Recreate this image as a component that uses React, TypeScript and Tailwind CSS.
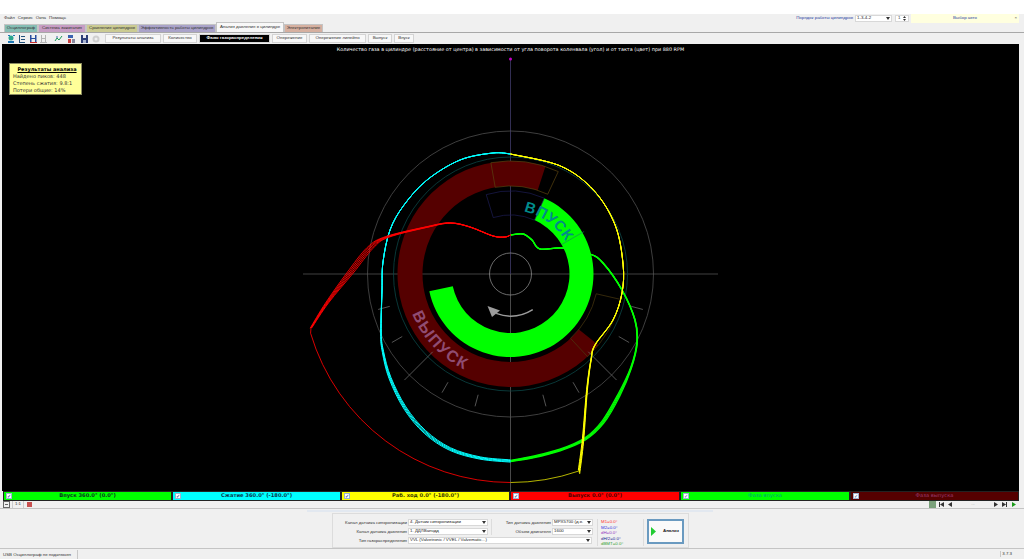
type Pt = [number, number];

const CX = 510.5;
const CY = 274;

const polar = (r: number, deg: number): Pt => {
  const a = (deg * Math.PI) / 180;
  return [CX + r * Math.sin(a), CY - r * Math.cos(a)];
};

const sector = (r1: number, r2: number, a1: number, a2: number) => {
  const large = a2 - a1 > 180 ? 1 : 0;
  const [x1, y1] = polar(r2, a1);
  const [x2, y2] = polar(r2, a2);
  const [x3, y3] = polar(r1, a2);
  const [x4, y4] = polar(r1, a1);
  return `M${x1} ${y1}A${r2} ${r2} 0 ${large} 1 ${x2} ${y2}L${x3} ${y3}A${r1} ${r1} 0 ${large} 0 ${x4} ${y4}Z`;
};

const smooth = (pts: Pt[]) => {
  let d = `M${pts[0][0]} ${pts[0][1]}`;
  for (let i = 0; i < pts.length - 1; i++) {
    const p0 = pts[Math.max(i - 1, 0)];
    const p1 = pts[i];
    const p2 = pts[i + 1];
    const p3 = pts[Math.min(i + 2, pts.length - 1)];
    d += `C${p1[0] + (p2[0] - p0[0]) / 6} ${p1[1] + (p2[1] - p0[1]) / 6} ${p2[0] - (p3[0] - p1[0]) / 6} ${p2[1] - (p3[1] - p1[1]) / 6} ${p2[0]} ${p2[1]}`;
  }
  return d;
};

// each cycle is scaled about the centre, weight says how far the cycles spread at that point
const scaled = (pts: Pt[], s: number, w: number[]): Pt[] =>
  pts.map(([x, y], i) => {
    const k = 1 + s * w[i];
    return [CX + (x - CX) * k, CY + (y - CY) * k];
  });

const redThick: Pt[] = [[311, 328], [327, 303], [350, 273], [370, 248], [387, 237], [427, 227], [450, 223], [470, 227], [493, 236], [505, 237], [510.5, 235]];
const redW = [0.2, 0.45, 1, 1, 0.55, 0.3, 0.25, 0.2, 0.15, 0.1, 0.1];
const greenA: Pt[] = [[510.5, 235], [523, 234], [532, 240], [540, 249], [563, 248], [590, 254], [603, 263], [622, 290], [635, 320], [637, 343], [631, 368], [619, 395], [603, 422], [585, 439], [560, 450], [533, 457], [510.5, 461]];
const greenW = [0.3, 0.3, 0.3, 0.3, 0.2, 0.1, 0.1, 0.15, 0.2, 0.2, 0.3, 0.7, 0.7, 0.5, 0.4, 0.4, 0.3];
const cyanA: Pt[] = [[510.5, 461], [480, 458], [450, 449], [425, 432], [405, 408], [390, 378], [383, 352], [381, 333], [382, 290], [383, 262], [390, 230], [404, 205], [427, 180], [460, 160], [493, 153], [510.5, 154]];
const cyanW = [0.5, 0.5, 0.6, 0.7, 0.7, 0.6, 0.4, 0.2, 0, 0, 0, 0, 0, 0, 0, 0];
const yellowA: Pt[] = [[510.5, 154], polar(119, 25), polar(118, 45), polar(115.5, 65), polar(113, 85), [622, 293], [613, 320], [595, 345], [591, 360], [587, 390], [583, 440], [579, 472]];
const yellowW = [0, 0, 0, 0, 0, 0, 0.1, 0.2, 0.2, 0.4, 0.7, 0.8];

const ticks = [105, 120, 150, 165, 195, 210, 240, 255];

const Chart = () => (
  <svg viewBox="2 44 1017 447" className="block h-[447px] w-[1017px]">
    <defs>
      <path id="intakeArc" d={`M${polar(64, 12).join(" ")}A64 64 0 0 1 ${polar(64, 75).join(" ")}`} />
      <path id="exhaustArc" d={`M${polar(106, 248).join(" ")}A106 106 0 0 0 ${polar(106, 190).join(" ")}`} />
    </defs>
    <line x1={303} y1={CY} x2={718} y2={CY} stroke="#5c5c5c" strokeWidth={0.7} />
    <line x1={CX} y1={60} x2={CX} y2={CY} stroke="#3f3a68" strokeWidth={0.8} />
    <line x1={CX} y1={CY} x2={CX} y2={491} stroke="#5c5c5c" strokeWidth={0.8} />
    <circle cx={CX} cy={59} r={1.5} fill="#c000c0" />
    <circle cx={CX} cy={CY} r={21} fill="none" stroke="#9a9a9a" strokeWidth={0.7} />
    <circle cx={CX} cy={CY} r={143} fill="none" stroke="#595959" strokeWidth={0.7} />
    <circle cx={CX} cy={CY} r={117} fill="none" stroke="#0b4545" strokeWidth={0.8} />

    <path d={sector(88, 113, 129, 378)} fill="#550000" />
    <path d={sector(59, 83, 24, 258)} fill="#00ff00" />
    <path d={sector(88, 113, -10, 25)} fill="none" stroke="#5a4410" strokeWidth={0.7} />
    <path d={sector(88, 113, 103, 137)} fill="none" stroke="#4a3a10" strokeWidth={0.7} />
    <path d={sector(59, 83, -17, 24)} fill="none" stroke="#1c1c55" strokeWidth={0.7} />
    <line x1={polar(59, 60)[0]} y1={polar(59, 60)[1]} x2={polar(85, 60)[0]} y2={polar(85, 60)[1]} stroke="#1a7a6a" strokeWidth={0.6} />

    {ticks.map((a) => {
      const [x1, y1] = polar(125, a);
      const [x2, y2] = polar(137, a);
      return <line key={a} x1={x1} y1={y1} x2={x2} y2={y2} stroke="#777" strokeWidth={0.7} />;
    })}
    {[135, 225].map((a) => {
      const [x1, y1] = polar(110, a);
      const [x2, y2] = polar(150, a);
      return <line key={a} x1={x1} y1={y1} x2={x2} y2={y2} stroke="#777" strokeWidth={0.7} />;
    })}

    <text fontFamily="'Liberation Sans', sans-serif" fontSize={15} fontWeight={700} letterSpacing={0.5} fill="#008b8b">
      <textPath href="#intakeArc">ВПУСК</textPath>
    </text>
    <text fontFamily="'Liberation Sans', sans-serif" fontSize={16} fontWeight={700} letterSpacing={1.5} fill="#8f4c72">
      <textPath href="#exhaustArc">ВЫПУСК</textPath>
    </text>

    <path d={`M${polar(42, 148).join(" ")}A42 42 0 0 1 ${polar(42, 200).join(" ")}`} fill="none" stroke="#9c9c9c" strokeWidth={1.4} />
    <polygon points="487.5,306 500,310.5 492,317" fill="#9c9c9c" />

    {[-0.012, -0.004, 0.004, 0.012].map((s) => (
      <path key={s} d={smooth(scaled(greenA, s, greenW))} fill="none" stroke="#00ff00" strokeWidth={1.2} />
    ))}
    {[-0.012, -0.004, 0.004, 0.012].map((s) => (
      <path key={s} d={smooth(scaled(cyanA, s, cyanW))} fill="none" stroke="#00ffff" strokeWidth={1} />
    ))}
    {[-0.012, -0.004, 0.004, 0.012].map((s) => (
      <path key={s} d={smooth(scaled(yellowA, s, yellowW))} fill="none" stroke="#ffff00" strokeWidth={1} />
    ))}
    {[-0.02, -0.01, 0, 0.01, 0.02].map((s) => (
      <path key={s} d={smooth(scaled(redThick, s, redW))} fill="none" stroke="#ff0000" strokeWidth={0.9} />
    ))}
    <path d={`M${polar(208.5, 180).join(" ")}A208.500 208.500 0 0 1 ${polar(208.5, 253.5).join(" ")}L311 328`} fill="none" stroke="#f00000" strokeWidth={0.9} />
    <path d={`M${polar(208.5, 161).join(" ")}A208.500 208.500 0 0 1 ${polar(208.5, 180).join(" ")}`} fill="none" stroke="#c8c800" strokeWidth={0.9} />
  </svg>
);

const Caret = () => (
  <svg width={4} height={3} viewBox="0 0 4 3" className="shrink-0">
    <path d="M0 0h4L2 3z" fill="#333" />
  </svg>
);

const Select = ({ text, width }: { text: string; width: string }) => (
  <div className={`flex h-[7px] shrink-0 items-center justify-between border border-[#d8d8d8] bg-white pl-[1px] pr-[1px] text-[4.4px] text-[#222] ${width}`}>
    <span className="whitespace-nowrap">{text}</span>
    <Caret />
  </div>
);

const tabs = [
  { label: "Осциллограф", cls: "w-[34px] bg-[#86bdb4]" },
  { label: "Система зажигания", cls: "w-[48px] bg-[#c79dc4]" },
  { label: "Сравнение цилиндров", cls: "w-[52px] bg-[#cbcb92]" },
  { label: "Эффективность работы цилиндров", cls: "w-[78px] bg-[#aaa3c9]" },
  { label: "Анализ давления в цилиндре", cls: "w-[68px] bg-[#f8f8f8] -mt-[1px] h-[10px]" },
  { label: "Электропитание", cls: "w-[39px] bg-[#d6b0a0]" },
];

const subTabs = [
  { label: "Результаты анализа", cls: "w-[56px]" },
  { label: "Количество", cls: "w-[34px]" },
  { label: "Фазы газораспределения", cls: "w-[71px] bg-black font-bold text-white" },
  { label: "Опережение", cls: "w-[35px]" },
  { label: "Опережение линейно", cls: "w-[57px]" },
  { label: "Выпуск", cls: "w-[24px]" },
  { label: "Впуск", cls: "w-[20px]" },
];

const ToolIcons = () => (
  <div className="flex items-center">
    <svg width={100} height={10} viewBox="0 0 100 10" className="shrink-0">
      <circle cx={7} cy={4} r={2.5} fill="#2aa58f" />
      <path d="M4 7h6v2H4zM4 1h2v1H4zM9 1h2v1H9z" fill="#1f77b4" />
      <path d="M15 1h1v8h-1zM17 2h4v1h-4zM17 5h4v1h-4zM15 8h6v1h-6z" fill="#23527c" />
      <path d="M26 1h1.500v8H26zM31 1h1.500v8H31zM27 4h4v1h-4z" fill="#2a4ea0" />
      <path d="M26 8h7v1h-7z" fill="#c83030" />
      <path d="M37 1h1v8h-1zM41 1h1v8h-1zM38 4h3v1h-3zM36 8h7v1h-7z" fill="#b5b5b5" />
      <path d="M51 7l2-3 2 2 3-4" fill="none" stroke="#1c9a5a" strokeWidth={1} />
      <circle cx={53} cy={3} r={0.8} fill="#2a4ea0" />
      <path d="M64 1h5v3h-5z" fill="#3a62b0" />
      <path d="M64 5h3v4h-3z" fill="#c84040" />
      <path d="M68 5h3v4h-3z" fill="#8a8aa0" />
      <path d="M77 1h7v8h-7z" fill="#2e3f78" />
      <path d="M79 1h3v3h-3z" fill="#e8e8f0" />
      <path d="M79 6h3v3h-3z" fill="#a9b4d0" />
      <circle cx={92} cy={5} r={3.5} fill="#cfcfcf" />
      <circle cx={92} cy={5} r={1.5} fill="#efefef" />
    </svg>
  </div>
);

const Segment = ({ label, cls, width }: { label: string; cls: string; width: string }) => (
  <div className={`relative flex h-full items-center justify-center border border-[#222] text-[5.2px] ${cls} ${width}`}>
    <span className="absolute left-[2px] top-[1px] flex h-[6px] w-[6px] items-center justify-center border border-[#9db4d0] bg-white text-[5px] leading-none text-[#2a4ea0]">
      ✓
    </span>
    <span className="whitespace-nowrap font-['DejaVu_Sans',sans-serif]">{label}</span>
  </div>
);

const NavIcon = ({ d, fill = "#333" }: { d: string; fill?: string }) => (
  <svg width={7} height={7} viewBox="0 0 7 7" className="shrink-0">
    <path d={d} fill={fill} />
  </svg>
);

export default function App() {
  return (
    <div className="flex h-[559px] w-[1024px] flex-col overflow-hidden bg-[#f0f0f0] font-['Liberation_Sans',sans-serif] text-[4.4px] text-[#333]">
      <div className="h-[14px] shrink-0 bg-white" />

      <div className="flex h-[9px] shrink-0 items-center">
        <div className="ml-[4px] flex gap-[3px]">
          <span>Файл</span>
          <span>Сервис</span>
          <span>Окна</span>
          <span>Помощь</span>
        </div>
        <div className="ml-auto mr-[5px] flex h-full items-center">
          <span className="mr-[2px] text-[#2a3fa0]">Порядок работы цилиндров</span>
          <Select text="1-3-4-2" width="w-[37px]" />
          <div className="ml-[3px] flex h-[7px] w-[14px] items-center justify-between border border-[#d8d8d8] bg-white px-[2px]">
            <span>1</span>
            <span className="flex flex-col gap-[1px]">
              <svg width={3} height={2} viewBox="0 0 3 2"><path d="M0 2h3L1.500 0z" fill="#333" /></svg>
              <svg width={3} height={2} viewBox="0 0 3 2"><path d="M0 0h3L1.500 2z" fill="#333" /></svg>
            </span>
          </div>
          <div className="relative ml-[2px] flex h-full w-[108px] items-center justify-center bg-[#ffffdf] text-[#2a3fa0]">
            Выбор авто
            <span className="absolute right-[2px] text-[#555]">×</span>
          </div>
        </div>
      </div>

      <div className="flex h-[10px] shrink-0 items-end border-b border-[#a8a8a8] pl-[4px]">
        {tabs.map((t) => (
          <div key={t.label} className={`flex h-[8px] shrink-0 items-center justify-center whitespace-nowrap border border-b-0 border-[#c4c4c4] ${t.cls}`}>
            {t.label}
          </div>
        ))}
      </div>

      <div className="flex h-[11px] shrink-0 items-center pl-[4px]">
        <ToolIcons />
        <div className="ml-[1px] flex h-[9px] gap-[2px]">
          {subTabs.map((t) => (
            <div key={t.label} className={`flex items-center justify-center whitespace-nowrap border border-[#d4d4d4] ${t.cls.includes("bg-black") ? "" : "bg-[#f8f8f8]"} ${t.cls}`}>
              {t.label}
            </div>
          ))}
        </div>
      </div>

      <div className="relative ml-[2px] mr-[5px] h-[447px] shrink-0 bg-black">
        <Chart />
        <div className="absolute left-0 right-0 top-[2px] text-center font-['DejaVu_Sans',sans-serif] text-[4.9px] text-white">
          Количество газа в цилиндре (расстояние от центра) в зависимости от угла поворота коленвала (угол) и от такта (цвет) при 880 RPM
        </div>
        <div className="absolute left-[7px] top-[19px] h-[32px] w-[73px] border border-[#8a8a60] bg-[#ffff99] pl-[3px] pt-[2px] font-['DejaVu_Sans',sans-serif] text-[5px] leading-[7px] text-[#333]">
          <div className="text-center font-bold text-black underline">Результаты анализа</div>
          <div>Найдено пиков: 448</div>
          <div>Степень сжатия: 9.8:1</div>
          <div>Потери общие: 14%</div>
        </div>
      </div>

      <div className="ml-[3px] mr-[5px] flex h-[10px] shrink-0">
        <Segment label="Впуск 360.0° (0.0°)" cls="bg-[#00ff00] font-bold text-[#0a3a20]" width="w-[169px]" />
        <Segment label="Сжатие 360.0° (-180.0°)" cls="bg-[#00ffff] font-bold text-[#0a3a50]" width="w-[169px]" />
        <Segment label="Раб. ход 0.0° (-180.0°)" cls="bg-[#ffff00] font-bold text-[#3a3a00]" width="w-[169px]" />
        <Segment label="Выпуск 0.0° (0.0°)" cls="bg-[#ff0000] font-bold text-[#500000]" width="w-[170px]" />
        <Segment label="Фаза впуска" cls="bg-[#00ff00] text-[#00a080]" width="w-[170px]" />
        <Segment label="Фаза выпуска" cls="bg-[#550000] text-[#9a3c70]" width="w-[169px]" />
      </div>

      <div className="flex h-[7px] shrink-0 items-center px-[3px]">
        <NavIcon d="M0 0h7v7H0zM1 1v5h5V1zM2 3h3v1H2z" fill="#666" />
        <span className="mx-[2px] w-[12px] border-x border-[#ccc] text-center">1:1</span>
        <NavIcon d="M1 1h5v5H1z" fill="#c85050" />
        <div className="ml-auto mr-[4px] flex items-center gap-[2px]">
          <NavIcon d="M0 0h7v7H0zM2 3h3v1H2zM3 2h1v3H3z" fill="#7aa07a" />
          <NavIcon d="M1 1h1v5H1zM6 1v5L2 3.500z" />
          <NavIcon d="M5 1v5L1 3.500z" />
          <span className="mx-[12px] w-[10px] text-center text-[#888]">...</span>
          <NavIcon d="M2 1v5l4-2.500z" />
          <NavIcon d="M1 1v5l4-2.500zM5 1h1v5H5z" />
          <NavIcon d="M2 1v5l4-2.500z" fill="#1a9a1a" />
        </div>
      </div>

      <div className="flex h-[41px] shrink-0 flex-col border-y border-[#c4c4c4]">
        <div className="ml-[307px] mt-[1px] flex h-[2px] w-[406px] items-center bg-[#e2e8f0]" />
        <div className="ml-[332px] mt-[1px] flex h-[35px] w-[357px] items-start border border-[#dcdcdc] pt-[5px]">
          <div className="grid w-[260px] grid-cols-[74px_80px_1fr] gap-x-[1px] gap-y-[2px]">
            <span className="text-right leading-[7px]">Канал датчика синхронизации</span>
            <Select text="4. Датчик синхронизации" width="w-[80px]" />
            <div className="row-span-2 ml-[2px] flex flex-col gap-[2px] border-l border-[#dcdcdc]">
              <div className="flex justify-end gap-[1px]">
                <span className="leading-[7px]">Тип датчика давления</span>
                <Select text="MPX5700 (д.в." width="w-[41px]" />
              </div>
              <div className="flex justify-end gap-[1px]">
                <span className="leading-[7px]">Объем двигателя</span>
                <Select text="1600" width="w-[41px]" />
              </div>
            </div>
            <span className="text-right leading-[7px]">Канал датчика давления</span>
            <Select text="1. ДДЛВанчдд" width="w-[80px]" />
            <span className="text-right leading-[7px]">Тип газораспределения</span>
            <div className="col-span-2">
              <Select text="VVL (Valvetronic / VVEL / Valvematic...)" width="w-[184px]" />
            </div>
          </div>
          <div className="ml-[4px] h-[27px] w-[47px] border-x border-[#dcdcdc] pl-[3px] text-[4.4px] leading-[5.5px]">
            <div className="text-[#ff3030]">M1=0.0°</div>
            <div className="text-[#3030e0]">M2=0.0°</div>
            <div className="text-[#9030c0]">dH=0.0°</div>
            <div className="text-[#202090]">dH/2=0.0°</div>
            <div className="text-[#30a030]">dBMT=0.0°</div>
          </div>
          <button className="ml-[3px] flex h-[25px] w-[37px] items-center border-2 border-[#6a9ac0] bg-[#fafafa] pl-[2px] text-[4.4px] font-bold text-[#222]">
            <svg width={5} height={9} viewBox="0 0 5 9" className="shrink-0">
              <path d="M0 0l5 4.500L0 9z" fill="#22cc33" />
            </svg>
            <span className="ml-[7px]">Анализ</span>
          </button>
        </div>
      </div>

      <div className="flex h-[10px] shrink-0 items-center whitespace-nowrap">
        <span className="w-[78px] border-r border-[#c8c8c8] pl-[3px] leading-[9px]">USB Осциллограф не подключен</span>
        <span className="ml-auto mr-[12px] border-l border-[#c8c8c8] pl-[1px]">3.7.3</span>
      </div>
    </div>
  );
}
